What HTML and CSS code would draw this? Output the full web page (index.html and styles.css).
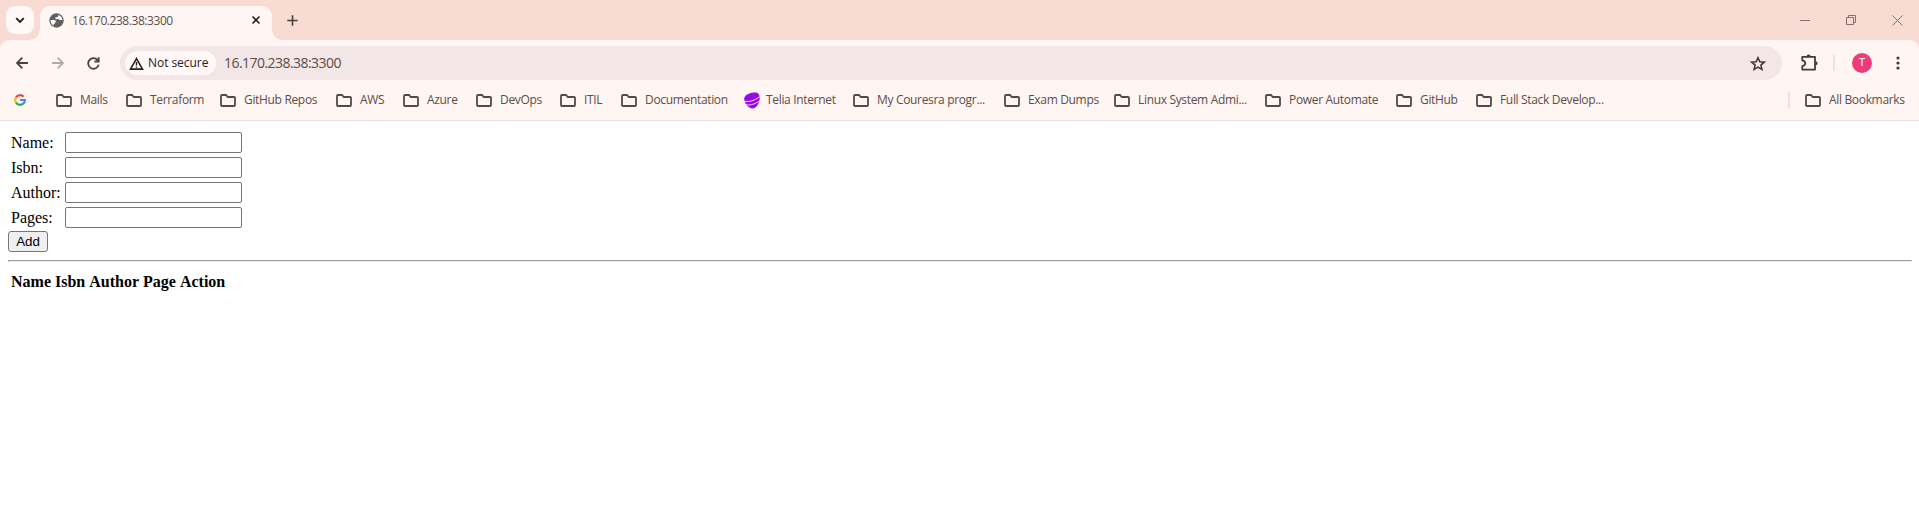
FILE: index.html
```
<!DOCTYPE html>
<html lang="en">
<head>
<meta charset="utf-8">
<title>16.170.238.38:3300</title>
<link rel="stylesheet" href="styles.css">
</head>
<body>
<svg class="defs" width="0" height="0">
  <symbol id="folder" viewBox="0 0 16 13"><path d="M1 11V2Q1 1 2 1H6L7.8 3H14Q15 3 15 4V11Q15 12 14 12H2Q1 12 1 11Z" fill="none" stroke="#534946" stroke-width="1.8"/></symbol>
</svg>
<header class="browser">
  <div class="tabstrip">
    <div class="search-tabs"><svg width="10" height="7" viewBox="0 0 10 7"><path d="M1.2 1.2L5 5L8.8 1.2" fill="none" stroke="#1f1a1a" stroke-width="1.8"/></svg></div>
    <div class="tab">
      <svg class="globe" width="15" height="15" viewBox="0 0 15 15"><circle cx="7.5" cy="7.5" r="7.2" fill="#5f6063"/><path d="M1.6 7H5.2Q7.2 7.3 7.4 9.3H5.8V11.1H4.6V12.7Q1.5 11 1.6 7ZM9.2 1.9Q13 3 13.4 7H10.7Q9.6 5.8 7.8 6.2H6.4V4.2H8Q9.3 3.7 9.2 1.9Z" fill="#fff8f6"/></svg>
      <span class="tab-title">16.170.238.38:3300</span>
      <svg class="close" width="10" height="10" viewBox="0 0 10 10"><path d="M1.5 1.5L8.5 8.5M8.5 1.5L1.5 8.5" stroke="#272020" stroke-width="1.6"/></svg>
    </div>
    <svg class="new-tab" width="11" height="11" viewBox="0 0 11 11"><path d="M5.5 .3V10.7M.3 5.5H10.7" stroke="#463e3b" stroke-width="1.6"/></svg>
    <div class="window-controls">
      <svg width="10" height="10" viewBox="0 0 10 10"><path d="M0 5.5H10" stroke="#83716c"/></svg>
      <svg width="10" height="10" viewBox="0 0 10 10"><path d="M.5 2.5H7.5V9.5H.5ZM2.5 2.5V.5H9.5V7.5H7.5" fill="none" stroke="#83716c"/></svg>
      <svg width="11" height="11" viewBox="0 0 11 11"><path d="M.5 .5L10.5 10.5M10.5 .5L.5 10.5" stroke="#83716c"/></svg>
    </div>
  </div>
  <div class="toolbar">
    <svg class="back" width="12" height="12" viewBox="0 0 12 12"><path d="M12 6H1.3M6.3 .7L1.1 6L6.3 11.3" fill="none" stroke="#51403c" stroke-width="1.8"/></svg>
    <svg class="forward" width="12" height="12" viewBox="0 0 12 12"><path d="M0 6H10.7M5.7 .7L10.9 6L5.7 11.3" fill="none" stroke="#b3a9a6" stroke-width="1.8"/></svg>
    <svg class="reload" width="13" height="13" viewBox="0 0 13 13"><path d="M10.7 3.2A5.3 5.3 0 1 0 11.7 7.6M11.7 .3V4.5H7.4" fill="none" stroke="#51403c" stroke-width="1.8"/></svg>
    <div class="omnibox">
      <div class="chip">
        <svg width="15" height="13" viewBox="0 0 15 13"><path d="M7.5 1.6L13.5 12.1H1.5Z" fill="none" stroke="#27211f" stroke-width="1.6"/><path d="M7.5 5V8.5M7.5 9.4V10.8" stroke="#27211f" stroke-width="1.4"/></svg>
        <span>Not secure</span>
      </div>
      <span class="url">16.170.238.38:3300</span>
      <svg class="star" width="16" height="15" viewBox="0 0 16 15"><path d="M8 1.7L9.8 5.8L14.2 6.2L10.9 9.1L11.9 13.4L8 11.1L4.1 13.4L5.1 9.1L1.8 6.2L6.2 5.8Z" fill="none" stroke="#453a37" stroke-width="1.6"/></svg>
    </div>
    <svg class="puzzle" width="17" height="17" viewBox="0 0 17 17"><path d="M1.3 2.9H14V15.6H1.3V12.2Q4.3 11.4 4.3 9.3Q4.3 7.2 1.3 6.4Z" fill="none" stroke="#453a37" stroke-width="1.8" stroke-linejoin="round"/><path d="M5.6 2.4A2 2 0 0 1 9.6 2.4ZM14.6 7.2A2 2 0 0 1 14.6 11.2Z" fill="#453a37"/></svg>
    <i class="rule"></i>
    <span class="avatar">T</span>
    <svg class="menu" width="4" height="14" viewBox="0 0 4 14"><g fill="#453a37"><circle cx="2" cy="2" r="1.6"/><circle cx="2" cy="7" r="1.6"/><circle cx="2" cy="12" r="1.6"/></g></svg>
  </div>
  <nav class="bookmarks">
    <a class="google"><svg width="12" height="12" viewBox="0 0 12 12" fill="none" stroke-width="2.2"><path d="M2 3.4A4.8 4.8 0 0 1 9.5 2.7" stroke="#ea4335"/><path d="M2 8.6A4.9 4.9 0 0 1 2 3.4" stroke="#fbbc05"/><path d="M2 8.6A4.8 4.8 0 0 0 9.1 9.7" stroke="#34a853"/><path d="M6.1 6H10.8Q10.8 8.5 9.1 9.7" stroke="#4285f4"/></svg></a>
    <a><svg class="folder"><use href="#folder"/></svg><span>Mails</span></a>
    <a><svg class="folder"><use href="#folder"/></svg><span>Terraform</span></a>
    <a><svg class="folder"><use href="#folder"/></svg><span>GitHub Repos</span></a>
    <a><svg class="folder"><use href="#folder"/></svg><span>AWS</span></a>
    <a><svg class="folder"><use href="#folder"/></svg><span>Azure</span></a>
    <a><svg class="folder"><use href="#folder"/></svg><span>DevOps</span></a>
    <a><svg class="folder"><use href="#folder"/></svg><span>ITIL</span></a>
    <a><svg class="folder"><use href="#folder"/></svg><span>Documentation</span></a>
    <a class="telia"><svg width="16" height="17" viewBox="0 0 16 17"><path d="M.2 6.2C1 2.5 6 .5 12.5 .5C15 1.5 16 4 15.7 7C15 12 12 16.5 8.5 16.5C4.5 16.5 0 11 .2 6.2Z" fill="#990ae3"/><path d="M0 9.2C5 10.4 11 8.4 15.8 4.6M2 12.8C7 13.6 12 11.6 15.6 8.6" fill="none" stroke="#f7e2fc" stroke-width=".9"/></svg><span>Telia Internet</span></a>
    <a><svg class="folder"><use href="#folder"/></svg><span>My Couresra progr...</span></a>
    <a><svg class="folder"><use href="#folder"/></svg><span>Exam Dumps</span></a>
    <a><svg class="folder"><use href="#folder"/></svg><span>Linux System Admi...</span></a>
    <a><svg class="folder"><use href="#folder"/></svg><span>Power Automate</span></a>
    <a><svg class="folder"><use href="#folder"/></svg><span>GitHub</span></a>
    <a><svg class="folder"><use href="#folder"/></svg><span>Full Stack Develop...</span></a>
    <i class="rule"></i>
    <a><svg class="folder"><use href="#folder"/></svg><span>All Bookmarks</span></a>
  </nav>
</header>
<main class="page">
  <table>
    <tr><td>Name:</td><td><input class="field" type="text"></td></tr>
    <tr><td>Isbn:</td><td><input class="field" type="text"></td></tr>
    <tr><td>Author:</td><td><input class="field" type="text"></td></tr>
    <tr><td>Pages:</td><td><input class="field" type="text"></td></tr>
  </table>
  <button class="add">Add</button>
  <hr>
  <table><tr><th>Name</th><th>Isbn</th><th>Author</th><th>Page</th><th>Action</th></tr></table>
</main>
</body>
</html>
```
FILE: styles.css
```
* { box-sizing: border-box; }
body { margin: 0; background: #fff; overflow: hidden; font-family: "Liberation Serif", serif; }
svg { display: block; flex: none; }
.defs { position: absolute; }
.browser { height: 121px; background: linear-gradient(#f8dcd3 50px, #fff6f4 50px); border-bottom: 1px solid #eadfda; font-family: "Open Sans", sans-serif; color: #5b4d49; }
.tabstrip { height: 40px; display: flex; background: #f8dcd3; padding-left: 6px; }
.search-tabs { width: 28px; height: 28px; margin-top: 6px; border-radius: 9px; background: #fff8f7; display: grid; place-items: center; }
.tab { width: 232px; height: 34px; margin: 6px 0 0 6px; padding: 0 11px 6px 9px; border-radius: 10px 10px 0 0; background: #fff6f4; display: flex; align-items: center; position: relative; }
.tab::before, .tab::after { content: ""; position: absolute; bottom: 0; width: 10px; height: 10px; }
.tab::before { left: -10px; background: radial-gradient(circle at 0 0, transparent 9.5px, #fff6f4 10px); }
.tab::after { right: -10px; background: radial-gradient(circle at 100% 0, transparent 9.5px, #fff6f4 10px); }
.tab-title { margin-left: 8px; font-size: 12px; letter-spacing: -0.44px; white-space: nowrap; }
.close { margin-left: auto; }
.new-tab { margin: 15px 0 0 15px; }
.window-controls { margin: 15px 16px 0 auto; display: flex; gap: 36px; }
.toolbar { height: 46px; display: flex; align-items: center; padding-left: 16px; background: #fff6f4; border-radius: 9px 9px 0 0; }
.forward { margin-left: 24px; }
.reload { margin-left: 23px; }
.omnibox { width: 1662px; height: 34px; margin-left: 20px; border-radius: 17px; background: #f2e6e6; display: flex; align-items: center; padding: 0 16px 0 5px; }
.chip { width: 91px; height: 24px; padding-left: 4px; border-radius: 12px; background: #fff8f7; color: #27211f; display: flex; align-items: center; gap: 4px; font-size: 12px; font-weight: 500; letter-spacing: -0.05px; white-space: nowrap; }
.chip span, .url { padding-bottom: 1px; }
.url { margin-left: 8px; font-size: 14px; letter-spacing: -0.55px; }
.star { margin-left: auto; }
.puzzle { margin-left: 19px; margin-bottom: 1px; }
.rule { display: block; width: 2px; height: 16px; background: #f9dcdc; }
.toolbar .rule { margin-left: 15px; }
.avatar { width: 20px; height: 20px; margin-left: 17px; border-radius: 50%; background: #eb3b7b; color: #fff; font: 11px/20px Roboto, sans-serif; text-align: center; }
.menu { margin-left: 24px; }
.bookmarks { height: 28px; display: grid; align-items: center; padding-left: 14px; grid-template-columns: 42px 70px 94px 116px 67px 73px 84px 61px 123px 109px 151px 110px 151px 131px 80px 312px 17px 1fr; font-size: 12px; letter-spacing: -0.33px; }
.bookmarks a { display: flex; align-items: center; gap: 8px; white-space: nowrap; }
.bookmarks span { padding-bottom: 2px; }
.bookmarks .telia { gap: 6px; }
.folder { width: 16px; height: 13px; }
.page { padding: 8px 7px 8px 8px; font-size: 16px; color: #000; }
.field { width: 177px; height: 21px; display: block; border: 1px solid #767676; border-radius: 2px; background: #fff; }
.add { display: block; width: 40px; height: 21px; padding: 0; border: 1px solid #767676; border-radius: 3px; background: #efefef; color: #000; font: 13.33px/18px "Liberation Sans", sans-serif; }
hr { margin: 8px 0; }
```
